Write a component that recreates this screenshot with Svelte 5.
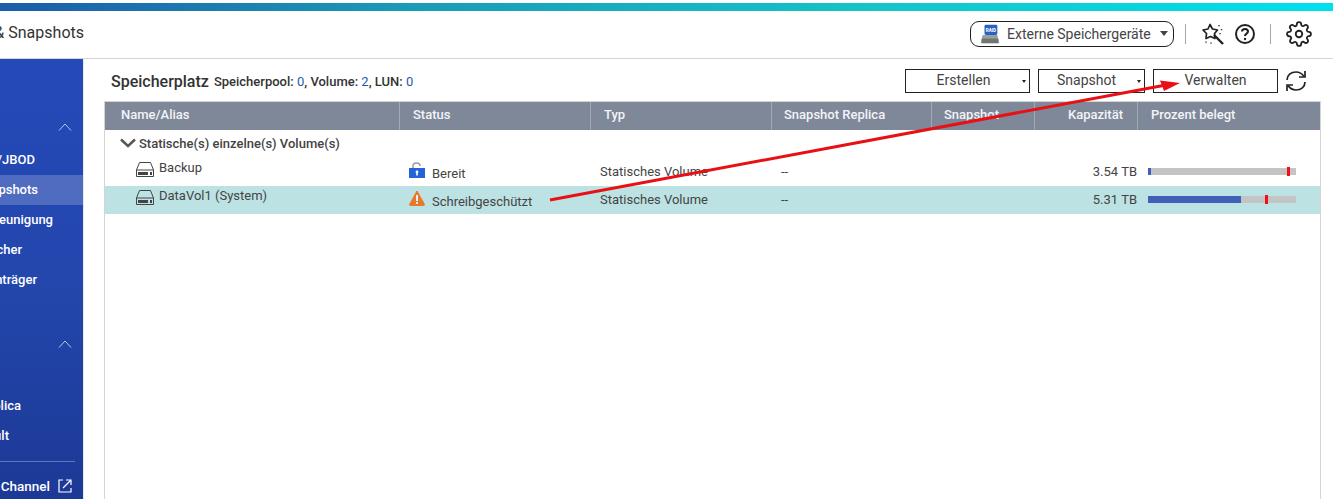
<script>
    // Sidebar rows, `end` is where the text stops, the window cuts them off on the left
    const firstGroup = [
        { label: 'Festplatten/JBOD', end: 36 },
        { label: 'Speicher/Snapshots', end: 39, active: true },
        { label: 'Cache-Beschleunigung', end: 54 },
        { label: 'Externer Speicher', end: 23 },
        { label: 'Externe Datenträger', end: 38 },
    ];
    const secondGroup = [
        { label: 'Snapshot Replica', end: 22 },
        { label: 'Snapshot Vault', end: 10 },
    ];

    const columns = [
        { title: 'Name/Alias' },
        { title: 'Status' },
        { title: 'Typ' },
        { title: 'Snapshot Replica' },
        { title: 'Snapshot' },
        { title: 'Kapazität', right: true },
        { title: 'Prozent belegt' },
    ];

    // used and mark are pixels on the 148px bar
    const volumes = [
        { name: 'Backup', status: 'Bereit', icon: 'lock', size: '3.54 TB', used: 3, mark: 139 },
        { name: 'DataVol1 (System)', status: 'Schreibgeschützt', icon: 'warn', size: '5.31 TB', used: 93, mark: 117, selected: true },
    ];
</script>

<div class="window">
    <div class="strip"></div>

    <header class="topbar">
        <div class="app-title">Speicher &amp; Snapshots</div>
        <div class="tools">
            <button class="pill">
                <svg width="22" height="22" viewBox="0 0 24 24">
                    <path d="M4 13 L20 13 L22 21 Q22 22 21 22 L3 22 Q2 22 2 21 Z" fill="#9aa09e" />
                    <rect x="3" y="17" width="18" height="5" fill="#6f7674" />
                    <rect x="6" y="2" width="14" height="11" rx="1.5" fill="#2a62c4" />
                    <text x="13" y="10" class="raid">RAID</text>
                </svg>
                <span>Externe Speichergeräte</span>
                <i class="caret"></i>
            </button>
            <span class="sep first"></span>
            <svg class="wand" width="24" height="24" viewBox="0 0 24 24" fill="none" stroke="#222" stroke-width="1.7">
                <path d="M9 2.5 L11.5 7 L16.5 8 L13.5 11.5 L14 16.5 L9.5 14.5 L5 16.5 L5.5 11.5 L2 8 L7 7 Z" stroke-linejoin="round" />
                <path d="M13 13 L22 22" stroke-width="2.4" />
                <path d="M18 3v1.2M20.5 7v1.2M19 11v1.2M5 19.5v1.2M10 20.5v1.2" stroke-width="1.3" />
            </svg>
            <svg class="help" width="22" height="22" viewBox="0 0 22 22" fill="none" stroke="#222" stroke-width="2">
                <circle cx="11" cy="11" r="9" />
                <path d="M8 8.6 C8 6.8 9.4 6 11 6 C12.7 6 14 7 14 8.5 C14 10.6 11 10.6 11 13" />
                <circle cx="11" cy="16" r="1.2" fill="#222" stroke="none" />
            </svg>
            <span class="sep second"></span>
            <svg class="gear" width="26" height="26" viewBox="0 0 24 24" fill="none" stroke="#222" stroke-width="1.7" stroke-linejoin="round">
                <circle cx="12" cy="12" r="3" />
                <path d="M19.4 15a1.65 1.65 0 0 0 .33 1.82l.06.06a2 2 0 1 1-2.83 2.83l-.06-.06a1.65 1.65 0 0 0-1.82-.33 1.65 1.65 0 0 0-1 1.51V21a2 2 0 0 1-4 0v-.09A1.65 1.65 0 0 0 9 19.4a1.65 1.65 0 0 0-1.82.33l-.06.06a2 2 0 1 1-2.83-2.83l.06-.06a1.65 1.65 0 0 0 .33-1.82 1.65 1.65 0 0 0-1.51-1H3a2 2 0 0 1 0-4h.09A1.65 1.65 0 0 0 4.6 9a1.65 1.65 0 0 0-.33-1.82l-.06-.06a2 2 0 1 1 2.83-2.83l.06.06a1.65 1.65 0 0 0 1.82.33H9a1.65 1.65 0 0 0 1-1.51V3a2 2 0 0 1 4 0v.09a1.65 1.65 0 0 0 1 1.51 1.65 1.65 0 0 0 1.82-.33l.06-.06a2 2 0 1 1 2.83 2.83l-.06.06a1.65 1.65 0 0 0-.33 1.82V9a1.65 1.65 0 0 0 1.51 1H21a2 2 0 0 1 0 4h-.09a1.65 1.65 0 0 0-1.51 1z" />
            </svg>
        </div>
    </header>

    <div class="body">
        <nav class="sidebar">
            <div class="group-head one">
                <svg width="14" height="8" viewBox="0 0 14 8" fill="none" stroke="#b9c8ee" stroke-width="1"><path d="M1 7.5 L7 1 L13 7.5" /></svg>
            </div>
            {#each firstGroup as item}
                <div class="nav-item" class:active={item.active} style="padding-right: {84 - item.end}px">{item.label}</div>
            {/each}
            <div class="group-head two">
                <svg width="14" height="8" viewBox="0 0 14 8" fill="none" stroke="#b9c8ee" stroke-width="1"><path d="M1 7.5 L7 1 L13 7.5" /></svg>
            </div>
            {#each secondGroup as item}
                <div class="nav-item lower" style="padding-right: {84 - item.end}px">{item.label}</div>
            {/each}
            <div class="nav-line"></div>
            <div class="channel">
                <span>QNAP Channel</span>
                <svg width="14" height="14" viewBox="0 0 14 14" fill="none" stroke="#fff" stroke-width="1.2">
                    <path d="M5 1 H1 V13 H13 V9" />
                    <path d="M5 9 L13 1 M8 1 H13 V6" />
                </svg>
            </div>
        </nav>

        <main class="content">
            <div class="toolbar">
                <h1>Speicherplatz</h1>
                <p class="counts">Speicherpool: <b>0</b>, Volume: <b>2</b>, LUN: <b>0</b></p>
                <button class="action create">Erstellen<i class="mini"></i></button>
                <button class="action snap">Snapshot<i class="mini"></i></button>
                <button class="action manage">Verwalten</button>
                <svg class="refresh" width="22" height="24" viewBox="0 0 22 24" fill="none" stroke="#222" stroke-width="1.7">
                    <path d="M2 11 C2 6 6 3 11 3 C14 3 17 4.5 19 7.5" />
                    <path d="M20 2 V8 H14" />
                    <path d="M20 13 C20 18 16 21 11 21 C8 21 5 19.5 3 16.5" />
                    <path d="M2 22 V16 H8" />
                </svg>
            </div>

            <div class="table">
                <div class="row head">
                    {#each columns as col}
                        <div class="th" class:right={col.right}>{col.title}</div>
                    {/each}
                </div>
                <div class="group-row">
                    <svg width="16" height="10" viewBox="0 0 16 10" fill="none" stroke="#555" stroke-width="2.4"><path d="M1 1.5 L8 8 L15 1.5" /></svg>
                    <span>Statische(s) einzelne(s) Volume(s)</span>
                </div>
                {#each volumes as vol}
                    <div class="row item" class:selected={vol.selected}>
                        <div class="cell name">
                            <svg width="18" height="15" viewBox="0 0 18 15" fill="none" stroke="#444" stroke-width="1">
                                <path d="M3.5 .5 H14.5 L17.5 8 V14.5 H.5 V8 Z" />
                                <path d="M.5 8 H17.5" />
                                <rect x="2" y="10" width="10" height="3" fill="#444" stroke="none" />
                                <rect x="14" y="10" width="2" height="3" fill="#444" stroke="none" />
                            </svg>
                            <span>{vol.name}</span>
                        </div>
                        <div class="cell status">
                            {#if vol.icon === 'lock'}
                                <svg width="16" height="16" viewBox="0 0 16 16">
                                    <path d="M4 8 V4 C4 2 5.5 1 7.5 1 C9.5 1 11 2 11 4" fill="none" stroke="#999" stroke-width="1.5" />
                                    <rect y="6" width="16" height="10" fill="#2561d9" />
                                    <circle cx="8" cy="10" r="1.4" fill="#fff" />
                                    <rect x="7.2" y="10" width="1.6" height="3.5" fill="#fff" />
                                </svg>
                            {:else}
                                <svg width="16" height="16" viewBox="0 0 16 16">
                                    <path d="M8 1 L15.5 14.5 Q15.5 15.5 14.5 15.5 H1.5 Q.5 15.5 .5 14.5 Z" fill="#e8792b" stroke="#e8792b" stroke-linejoin="round" />
                                    <rect x="7.1" y="5" width="1.8" height="6" fill="#fff" />
                                    <rect x="7.1" y="12" width="1.8" height="1.8" fill="#fff" />
                                </svg>
                            {/if}
                            <span>{vol.status}</span>
                        </div>
                        <div class="cell plain">Statisches Volume</div>
                        <div class="cell plain">--</div>
                        <div class="cell plain"></div>
                        <div class="cell plain size">{vol.size}</div>
                        <div class="cell usage">
                            <div class="bar">
                                <div class="fill" style="width: {vol.used}px"></div>
                                <div class="mark" style="left: {vol.mark}px"></div>
                            </div>
                        </div>
                    </div>
                {/each}
            </div>
        </main>
    </div>

    <!-- annotation someone drew over the screenshot -->
    <svg class="arrow" width="1333" height="499" viewBox="0 0 1333 499">
        <path d="M550 200 L1166 85" stroke="#e81015" stroke-width="3" />
        <path d="M1180 83 L1160 80.5 L1164 91 Z" fill="#e81015" />
    </svg>
</div>

<style>
    :global(body) {
        margin: 0;
        background: #fff;
    }

    .window {
        position: relative;
        width: 1333px;
        height: 499px;
        overflow: hidden;
        font-family: Roboto, "Noto Sans", sans-serif;
        color: #333;
        background: #fff;
    }

    .strip {
        height: 8px;
        margin-top: 3px;
        background: linear-gradient(90deg, #1b5ca8 0%, #1a9ab8 30%, #14c4c8 65%, #00e0ee 100%);
    }

    .topbar {
        display: flex;
        align-items: center;
        justify-content: space-between;
        height: 47px;
        border-bottom: 1px solid #d4d4d4;
    }

    .app-title {
        width: 84px;
        display: flex;
        justify-content: flex-end;
        white-space: nowrap;
        overflow: hidden;
        font-size: 16px;
        color: #333;
        margin-top: -5px;
    }

    .tools {
        display: flex;
        align-items: center;
        margin-top: -2px;
    }

    .pill {
        display: flex;
        align-items: center;
        box-sizing: border-box;
        width: 204px;
        height: 26px;
        padding: 0 8px;
        border: 1px solid #222;
        border-radius: 9px;
        background: #fff;
        font: 14px Roboto, sans-serif;
        color: #444;
        white-space: nowrap;
    }

    .pill svg {
        flex-shrink: 0;
    }

    .pill span {
        margin-left: 6px;
    }

    .raid {
        font: bold 5px Roboto, sans-serif;
        fill: #fff;
        text-anchor: middle;
    }

    .caret {
        margin-left: 9px;
        border-left: 4px solid transparent;
        border-right: 4px solid transparent;
        border-top: 5px solid #444;
    }

    .sep {
        width: 1px;
        height: 20px;
        background: #aaa69c;
    }

    .sep.first {
        margin: 0 15px 0 11px;
    }

    .sep.second {
        margin: 0 15px 0 14px;
    }

    .wand {
        margin-right: 9px;
    }

    .gear {
        margin-right: 21px;
    }

    .body {
        display: flex;
        height: 440px;
    }

    .sidebar {
        flex: 0 0 83px;
        border-right: 1px solid #e8e8e8;
        background: linear-gradient(180deg, #2549b8 0%, #2347ad 50%, #1c3996 100%);
        color: #fff;
        overflow: hidden;
        font-size: 13px;
        font-weight: 500;
    }

    .group-head {
        display: flex;
        justify-content: flex-end;
        padding-right: 11px;
        box-sizing: border-box;
    }

    .group-head.one {
        height: 86px;
        padding-top: 64px;
    }

    .group-head.two {
        height: 95px;
        padding-top: 45px;
    }

    .nav-item {
        display: flex;
        align-items: center;
        justify-content: flex-end;
        height: 30px;
        padding-bottom: 2px;
        box-sizing: border-box;
        white-space: nowrap;
    }

    .nav-item.lower {
        padding-bottom: 0;
    }

    .nav-item.active {
        background: rgba(255, 255, 255, 0.2);
    }

    .nav-line {
        height: 1px;
        margin: 11px 8px 0 0;
        background: rgba(255, 255, 255, 0.3);
    }

    .channel {
        display: flex;
        align-items: center;
        justify-content: flex-end;
        gap: 8px;
        height: 48px;
        padding-right: 11px;
        white-space: nowrap;
        font-size: 13.5px;
    }

    .channel svg {
        flex-shrink: 0;
    }

    .content {
        flex: 1;
        padding: 0 12px 0 20px;
        min-width: 0;
    }

    .toolbar {
        display: flex;
        align-items: center;
        height: 42px;
        padding: 2px 0 0 7px;
        box-sizing: border-box;
    }

    h1 {
        margin: 0 5px 0 0;
        font-size: 16px;
        font-weight: 500;
        color: #333;
    }

    .counts {
        margin: 1px auto 0 0;
        font-size: 13px;
        font-weight: 500;
        color: #333;
    }

    .counts b {
        font-weight: 400;
        color: #1f5aa8;
    }

    .action {
        position: relative;
        box-sizing: border-box;
        height: 24px;
        padding: 0 0 2px;
        border: 1px solid #222;
        background: #fff;
        font: 14px Roboto, sans-serif;
        color: #444;
    }

    .action.create {
        width: 125px;
        margin-right: 8px;
        padding-right: 8px;
    }

    .action.snap {
        width: 107px;
        margin-right: 8px;
        padding-right: 10px;
    }

    .action.manage {
        width: 125px;
        margin-right: 7px;
    }

    .mini {
        position: absolute;
        right: 3px;
        top: 10px;
        border-left: 2.5px solid transparent;
        border-right: 2.5px solid transparent;
        border-top: 3px solid #222;
    }

    .refresh {
        margin-right: 14px;
    }

    .table {
        height: 398px;
        border-left: 1px solid #d4d4d4;
        border-right: 1px solid #d4d4d4;
        border-top: 1px solid #d4d4d4;
        font-size: 13px;
    }

    .row {
        display: grid;
        grid-template-columns: 295px 191px 181px 160px 103px 103px 182px;
    }

    .head {
        height: 28px;
        background: #7f8899;
        color: #f2f4f7;
        font-size: 13px;
        font-weight: 500;
    }

    .th {
        display: flex;
        align-items: center;
        padding: 0 0 3px 13px;
        border-right: 1px solid #a2a9b6;
    }

    .th:first-child {
        padding-left: 16px;
    }

    .th:nth-child(4),
    .th:nth-child(5) {
        padding-left: 12px;
    }

    .th:last-child {
        border-right: none;
    }

    .th.right {
        justify-content: flex-end;
        padding-right: 14px;
    }

    .group-row {
        display: flex;
        align-items: center;
        gap: 3px;
        height: 28px;
        padding: 0 0 2px 15px;
        box-sizing: border-box;
        font-size: 13px;
        font-weight: 500;
        color: #444;
    }

    .item {
        height: 28px;
    }

    .item.selected {
        background: #bde2e3;
    }

    .cell {
        min-width: 0;
    }

    .name {
        display: flex;
        gap: 5px;
        padding: 2px 0 0 31px;
        font-size: 13px;
        color: #444;
    }

    .name svg {
        margin-top: 2px;
    }

    .status {
        display: flex;
        gap: 7px;
        padding: 5px 0 0 9px;
        color: #444;
        font-size: 13px;
    }

    .status svg {
        margin-top: -1px;
    }

    .status span {
        margin-top: 3px;
    }

    .plain {
        padding: 6px 0 0 9px;
        font-size: 13px;
        color: #444;
    }

    .size {
        padding: 6px 1px 0 0;
        text-align: right;
    }

    .usage {
        padding: 10px 0 0 10px;
    }

    .bar {
        position: relative;
        width: 148px;
        height: 7px;
        background: #c4c4c4;
    }

    .fill {
        height: 100%;
        background: #3f5fb8;
    }

    .mark {
        position: absolute;
        top: -1px;
        width: 3px;
        height: 9px;
        background: #f01015;
    }

    .arrow {
        position: absolute;
        left: 0;
        top: 0;
        pointer-events: none;
    }
</style>
